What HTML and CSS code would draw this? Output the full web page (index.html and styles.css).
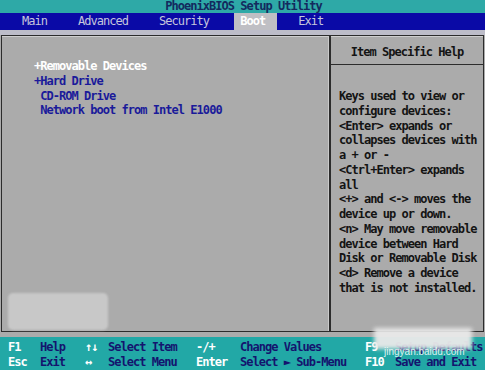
FILE: index.html
```html
<!DOCTYPE html>
<html>
<head>
<meta charset="utf-8">
<link rel="stylesheet" href="styles.css">
</head>
<body>
<div class="screen">
  <div class="title">PhoenixBIOS Setup Utility</div>
  <nav class="menu">
    <span class="tab">Main</span>
    <span class="tab">Advanced</span>
    <span class="tab">Security</span>
    <span class="tab active">Boot</span>
    <span class="tab">Exit</span>
  </nav>
  <div class="body">
    <div class="box">
      <div class="list">
        <div class="item sel">+Removable Devices</div>
        <div class="item">+Hard Drive</div>
        <div class="item"> CD-ROM Drive</div>
        <div class="item"> Network boot from Intel E1000</div>
      </div>
      <div class="help">
        <div class="help-head">Item Specific Help</div>
        <div class="help-text">Keys used to view or
configure devices:
&lt;Enter&gt; expands or
collapses devices with
a + or -
&lt;Ctrl+Enter&gt; expands
all
&lt;+&gt; and &lt;-&gt; moves the
device up or down.
&lt;n&gt; May move removable
device between Hard
Disk or Removable Disk
&lt;d&gt; Remove a device
that is not installed.</div>
      </div>
    </div>
  </div>
  <footer class="keys">
    <span class="k">F1</span><span class="d">Help</span><span class="k">↑↓</span><span class="d">Select Item</span><span class="k">-/+</span><span class="d">Change Values</span><span class="k">F9</span><span class="d">Setup Defaults</span>
    <span class="k">Esc</span><span class="d">Exit</span><span class="k">↔</span><span class="d">Select Menu</span><span class="k">Enter</span><span class="d">Select ► Sub-Menu</span><span class="k">F10</span><span class="d">Save and Exit</span>
  </footer>
  <div class="smudge"></div>
  <div class="wm-box"></div>
  <div class="wm-text">jingyan.baidu.com</div>
</div>
</body>
</html>
```
FILE: styles.css
```css
html, body {
  margin: 0;
  padding: 0;
  background: #ababab;
}
.screen {
  position: relative;
  width: 485px;
  height: 370px;
  overflow: hidden;
  font-family: "DejaVu Sans Mono", "Liberation Mono", monospace;
  font-size: 12px;
  letter-spacing: -0.97px;
  line-height: 14.75px;
  font-weight: bold;
}
.title {
  height: 13px;
  line-height: 13px;
  background: #2ea9a7;
  color: #132a5e;
  text-align: center;
  padding-left: 2px;
}
.menu {
  height: 17px;
  background: #0a0aa6;
  display: flex;
  align-items: center;
  gap: 15px;
  padding-left: 16px;
  box-sizing: border-box;
}
.tab {
  color: #c6c6dc;
  padding: 0 10px 0 6px;
  line-height: 17px;
  font-weight: normal;
}
.tab.active {
  background: #bfbfc4;
  color: #ffffff;
  font-weight: bold;
  padding-right: 12px;
}
.body {
  height: 307px;
  box-sizing: border-box;
  border-top: 5px solid #bdbdc9;
  padding: 0 1px 5px 1px;
  background: #ababab;
}
.box {
  height: 297px;
  box-sizing: border-box;
  border: 1px solid #2c2c2c;
  display: grid;
  grid-template-columns: 1fr 154px;
  box-shadow: inset 0 1px 0 #cfcfcf;
}
.list {
  padding: 23px 0 0 32px;
  border-right: 1px solid #cacaca;
}
.item {
  white-space: pre;
  color: #1a1a9a;
}
.item.sel {
  color: #ffffff;
}
.help {
  border-left: 2px solid #2c2c2c;
  display: flex;
  flex-direction: column;
}
.help-head {
  height: 29px;
  box-sizing: border-box;
  padding-top: 9px;
  text-align: center;
  color: #141414;
  border-bottom: 1px solid #2c2c2c;
}
.help-text {
  white-space: pre;
  color: #141414;
  padding: 24px 0 0 8px;
}
.keys {
  height: 33px;
  box-sizing: border-box;
  background: #22a8a6;
  padding: 3px 0 0 8px;
  display: grid;
  grid-template-columns: 32px 45px 23px 88px 44px 125px 30px 1fr;
  white-space: pre;
}
.k {
  color: #ffffff;
}
.d {
  color: #14146e;
}
.smudge {
  position: absolute;
  left: 8px;
  top: 293px;
  width: 100px;
  height: 37px;
  background: #c8c8c8;
  border-radius: 5px;
  filter: blur(1px);
}
.wm-box {
  position: absolute;
  left: 374px;
  top: 328px;
  width: 98px;
  height: 21px;
  background: rgba(232, 232, 232, 0.96);
  filter: blur(2px);
}
.wm-text {
  position: absolute;
  left: 384px;
  top: 346px;
  font-family: "Liberation Sans", Arial, sans-serif;
  font-weight: normal;
  letter-spacing: 0;
  font-size: 10px;
  line-height: 12px;
  color: rgba(255, 255, 255, 0.85);
}
```
